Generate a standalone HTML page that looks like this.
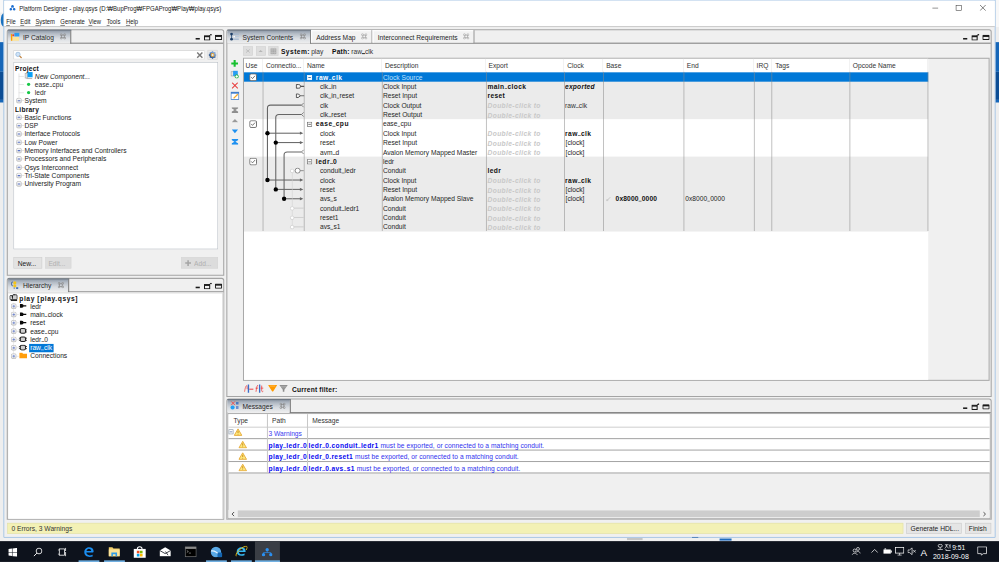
<!DOCTYPE html>
<html><head><meta charset="utf-8">
<style>
html,body{margin:0;padding:0;width:999px;height:562px;overflow:hidden;background:#f0f0f0;}
#root{position:absolute;left:0;top:0;width:1920px;height:1080px;transform:scale(0.520312);transform-origin:0 0;overflow:hidden;background:#f0f0f0;font-family:"Liberation Sans",sans-serif;font-size:12px;color:#000;}
#root div{position:absolute;}
.t{white-space:nowrap;line-height:1;}
.us{display:inline-block;width:0.42em;height:0.09em;background:currentColor;vertical-align:baseline;margin:0 0.02em;}
</style></head><body>
<div id="root">
<div style="left:0.0px;top:0.0px;width:7.0px;height:1040.0px;background:#eeeeee;"></div>
<div style="left:0.0px;top:0.0px;width:7.0px;height:24.0px;background:#f8f8f8;"></div>
<svg style="position:absolute;left:0.0px;top:24.0px;" width="7" height="29" viewBox="0 0 7 29"><ellipse cx="7.5" cy="14.5" rx="6" ry="13" fill="#1a72c0"/></svg>
<div style="left:0.0px;top:81.0px;width:7.0px;height:57.0px;background:#1666b8;"></div>
<div style="left:0.0px;top:138.0px;width:7.0px;height:54.0px;background:#0d4d94;"></div>
<div style="left:0.0px;top:192.0px;width:7.0px;height:5.0px;background:#1666b8;"></div>
<div style="left:1913.0px;top:0.0px;width:7.0px;height:1040.0px;background:#eeeeee;"></div>
<div style="left:1913.0px;top:0.0px;width:7.0px;height:52.0px;background:#f8f8f8;"></div>
<div style="left:1913.0px;top:81.0px;width:7.0px;height:57.0px;background:#1666b8;"></div>
<div style="left:1913.0px;top:138.0px;width:7.0px;height:54.0px;background:#0d4d94;"></div>
<div style="left:1913.0px;top:192.0px;width:7.0px;height:5.0px;background:#1666b8;"></div>
<div style="left:7.0px;top:0.0px;width:1906.0px;height:1033.0px;background:#f0f0f0;border:1px solid #6aa3dc;box-sizing:border-box"></div>
<div style="left:8.0px;top:1.0px;width:1904.0px;height:50.0px;background:#ffffff;"></div>
<div style="left:8.0px;top:50.0px;width:1904.0px;height:1.6px;background:#cdcdcd;"></div>
<svg style="position:absolute;left:18.0px;top:9.0px;" width="12" height="12" viewBox="0 0 12 12"><circle cx="6" cy="3" r="2.4" fill="#1e6fd0"/><circle cx="2.6" cy="9" r="2.4" fill="#1e6fd0"/><circle cx="9.4" cy="9" r="2.4" fill="#1e6fd0"/><path d="M6 3 L2.6 9 M6 3 L9.4 9" stroke="#1e6fd0" stroke-width="1.2"/></svg>
<div class="t" style="left:37.0px;top:10.5px;font-size:12.5px;color:#1a1a1a;font-weight:normal;font-style:normal;transform:scaleX(0.928);transform-origin:0 0">Platform Designer - play.qsys (D:₩BupProg₩FPGAProg₩Play₩play.qsys)</div>
<div style="left:1792.0px;top:15.0px;width:11.0px;height:1.2px;background:#333;"></div>
<div style="left:1837.0px;top:10.0px;width:11.0px;height:11.0px;background:transparent;border:1.2px solid #333;box-sizing:border-box"></div>
<svg style="position:absolute;left:1883.0px;top:9.0px;" width="12" height="12" viewBox="0 0 12 12"><path d="M0.5 0.5 L11.5 11.5 M11.5 0.5 L0.5 11.5" stroke="#333" stroke-width="1.2"/></svg>
<div class="t" style="left:12.3px;top:36.84px;font-size:12.2px;color:#1a1a1a;transform:scaleX(0.925);transform-origin:0 0"><u style="text-decoration:underline;text-underline-offset:1px">F</u>ile</div>
<div class="t" style="left:39.4px;top:36.84px;font-size:12.2px;color:#1a1a1a;transform:scaleX(0.925);transform-origin:0 0"><u style="text-decoration:underline;text-underline-offset:1px">E</u>dit</div>
<div class="t" style="left:68.4px;top:36.84px;font-size:12.2px;color:#1a1a1a;transform:scaleX(0.925);transform-origin:0 0"><u style="text-decoration:underline;text-underline-offset:1px">S</u>ystem</div>
<div class="t" style="left:115.5px;top:36.84px;font-size:12.2px;color:#1a1a1a;transform:scaleX(0.925);transform-origin:0 0"><u style="text-decoration:underline;text-underline-offset:1px">G</u>enerate</div>
<div class="t" style="left:170px;top:36.84px;font-size:12.2px;color:#1a1a1a;transform:scaleX(0.925);transform-origin:0 0"><u style="text-decoration:underline;text-underline-offset:1px">V</u>iew</div>
<div class="t" style="left:204.9px;top:36.84px;font-size:12.2px;color:#1a1a1a;transform:scaleX(0.925);transform-origin:0 0"><u style="text-decoration:underline;text-underline-offset:1px">T</u>ools</div>
<div class="t" style="left:241.8px;top:36.84px;font-size:12.2px;color:#1a1a1a;transform:scaleX(0.925);transform-origin:0 0"><u style="text-decoration:underline;text-underline-offset:1px">H</u>elp</div>
<div style="left:13.0px;top:56.0px;width:418.0px;height:474.0px;background:#f0f0f0;border:2.5px solid #a4a4a4;border-radius:5px 5px 0 0;box-sizing:border-box"></div>
<div style="left:15.0px;top:82.0px;width:414.0px;height:2.0px;background:#7f7f7f;"></div>
<div style="left:15.0px;top:58.0px;width:120.0px;height:26.0px;background:linear-gradient(#8c97a5,#b3bbc5 25%,#d8dce1 60%,#f0f0f0 100%);border-radius:4px 0 0 0"></div>
<div style="left:135.0px;top:58.0px;width:2.0px;height:26.0px;background:#7a7a7a;"></div>
<div style="left:15.0px;top:57.0px;width:122.0px;height:2.0px;background:#69737f;"></div>
<div class="t" style="left:44.0px;top:64.6px;font-size:13.57px;color:#262626;font-weight:normal;font-style:normal;;transform:scaleX(0.9434);transform-origin:0 0">IP Catalog</div>
<svg style="position:absolute;left:115.0px;top:64.0px;" width="12" height="12" viewBox="0 0 12 12"><g fill="none" stroke="#8c8c8c" stroke-width="1.3"><rect x="3.5" y="3.5" width="5" height="5"/><circle cx="2.6" cy="2.6" r="1.9"/><circle cx="9.4" cy="2.6" r="1.9"/><circle cx="2.6" cy="9.4" r="1.9"/><circle cx="9.4" cy="9.4" r="1.9"/></g></svg>
<div style="left:376.0px;top:72.5px;width:8.0px;height:3.0px;background:#1a1a1a;"></div>
<svg style="position:absolute;left:392.0px;top:65.0px;" width="16" height="13" viewBox="0 0 16 13"><rect x="1" y="4" width="10" height="8" fill="none" stroke="#1a1a1a" stroke-width="2"/><rect x="1" y="4" width="10" height="2.5" fill="#1a1a1a"/><path d="M9 5 L13 1.5" stroke="#1a1a1a" stroke-width="1.6" fill="none"/><circle cx="13.5" cy="1.8" r="1.6" fill="#1a1a1a"/></svg>
<svg style="position:absolute;left:413.0px;top:66.5px;" width="14" height="10" viewBox="0 0 14 10"><rect x="1" y="1" width="12" height="8" rx="1" fill="none" stroke="#1a1a1a" stroke-width="2"/><rect x="1" y="1" width="12" height="3" fill="#1a1a1a"/></svg>
<svg style="position:absolute;left:20.0px;top:62.0px;" width="18" height="18" viewBox="0 0 18 18"><rect x="7.7" y="1" width="9.6" height="7" fill="#2a9cf2"/><rect x="3.6" y="9" width="12.9" height="7.4" fill="#fde49a"/><rect x="0.9" y="3.4" width="2.7" height="13" fill="#ffa000"/><circle cx="5.5" cy="5.8" r="1.8" fill="#ef3a2a"/></svg>
<div style="left:26.0px;top:97.0px;width:367.0px;height:17.0px;background:#ffffff;border:1.5px solid #d6d6d6;border-top-color:#c4c4c4;border-left-color:#c8c8c8;box-sizing:border-box"></div>
<svg style="position:absolute;left:29.0px;top:99.0px;" width="14" height="14" viewBox="0 0 14 14"><circle cx="5.5" cy="5.5" r="4.2" fill="#cfe3f7" stroke="#8fb4da" stroke-width="1.4"/><path d="M8.5 8.5 L12.5 12.5" stroke="#c0803a" stroke-width="2.2"/></svg>
<svg style="position:absolute;left:377.0px;top:99.0px;" width="14" height="14" viewBox="0 0 14 14"><path d="M2 2 L12 12 M12 2 L2 12" stroke="#7a7a7a" stroke-width="2.8"/></svg>
<div style="left:399.0px;top:96.0px;width:19.0px;height:19.0px;background:#e9e9e9;border:1px solid #d4d4d4;box-sizing:border-box"></div>
<svg style="position:absolute;left:399.5px;top:96.5px;" width="17" height="17" viewBox="0 0 17 17"><defs><linearGradient id="gg" x1="0" y1="0" x2="0" y2="1"><stop offset="0" stop-color="#8fb0dc"/><stop offset="1" stop-color="#2a5288"/></linearGradient></defs><rect x="3" y="3" width="11" height="11" fill="url(#gg)"/><rect x="3" y="3" width="11" height="11" fill="url(#gg)" transform="rotate(45 8.5 8.5)"/><circle cx="8.5" cy="8.5" r="3.6" fill="#f0a830"/><circle cx="8.5" cy="8.5" r="1.9" fill="#dcecff"/></svg>
<div style="left:26.0px;top:120.0px;width:393.0px;height:359.0px;background:#ffffff;border:1.5px solid #b4bac2;box-sizing:border-box"></div>
<div class="t" style="left:28.8px;top:125.6px;font-size:13.57px;color:#111;font-weight:bold;font-style:normal;;letter-spacing:0.4px;transform:scaleX(0.9434);transform-origin:0 0">Project</div>
<div style="left:35.5px;top:141.0px;width:1.2px;height:56.0px;background:#d0d0d0;"></div>
<div style="left:36.0px;top:145.5px;width:10.0px;height:1.2px;background:#d0d0d0;"></div>
<div style="left:36.0px;top:161.5px;width:10.0px;height:1.2px;background:#d0d0d0;"></div>
<div style="left:36.0px;top:177.5px;width:10.0px;height:1.2px;background:#d0d0d0;"></div>
<svg style="position:absolute;left:47.0px;top:137.0px;" width="16" height="16" viewBox="0 0 16 16"><rect x="1" y="4" width="5" height="9" fill="#ddd" stroke="#9a9a9a" stroke-width="1"/><rect x="6" y="1.5" width="10" height="10" fill="#0aa0f5"/><rect x="4" y="13.5" width="11" height="1.5" fill="#9a9a9a"/></svg>
<div class="t" style="left:66.9px;top:140.1px;font-size:13.57px;color:#222;font-weight:normal;font-style:italic;;transform:scaleX(0.9434);transform-origin:0 0">New Component...</div>
<svg style="position:absolute;left:51.0px;top:158.0px;" width="8" height="8" viewBox="0 0 8 8"><circle cx="4" cy="4" r="3.2" fill="#18c848"/></svg>
<div class="t" style="left:66.9px;top:156.1px;font-size:13.57px;color:#2a2a2a;font-weight:normal;font-style:normal;;transform:scaleX(0.9434);transform-origin:0 0">ease<span class="us"></span>cpu</div>
<svg style="position:absolute;left:51.0px;top:174.0px;" width="8" height="8" viewBox="0 0 8 8"><circle cx="4" cy="4" r="3.2" fill="#18c848"/></svg>
<div class="t" style="left:66.9px;top:172.1px;font-size:13.57px;color:#2a2a2a;font-weight:normal;font-style:normal;;transform:scaleX(0.9434);transform-origin:0 0">ledr</div>
<svg style="position:absolute;left:31.0px;top:188.0px;" width="11" height="11" viewBox="0 0 11 11"><defs><linearGradient id="pg" x1="0" y1="0" x2="0" y2="1"><stop offset="0" stop-color="#ffffff"/><stop offset="1" stop-color="#dcdcdc"/></linearGradient></defs><rect x="0.75" y="0.75" width="9.5" height="9.5" rx="3" fill="url(#pg)" stroke="#b9b9b9" stroke-width="1.5"/><path d="M3 5.5 L8 5.5" stroke="#5a74c8" stroke-width="2"/></svg>
<div style="left:42.0px;top:193.0px;width:5.0px;height:1.2px;background:#cfcfcf;"></div>
<div class="t" style="left:47.0px;top:187.1px;font-size:13.57px;color:#222;font-weight:normal;font-style:normal;;transform:scaleX(0.9434);transform-origin:0 0">System</div>
<div class="t" style="left:28.8px;top:205.1px;font-size:13.57px;color:#111;font-weight:bold;font-style:normal;;letter-spacing:0.4px;transform:scaleX(0.9434);transform-origin:0 0">Library</div>
<svg style="position:absolute;left:31.0px;top:220.0px;" width="11" height="11" viewBox="0 0 11 11"><defs><linearGradient id="pg" x1="0" y1="0" x2="0" y2="1"><stop offset="0" stop-color="#ffffff"/><stop offset="1" stop-color="#dcdcdc"/></linearGradient></defs><rect x="0.75" y="0.75" width="9.5" height="9.5" rx="3" fill="url(#pg)" stroke="#b9b9b9" stroke-width="1.5"/><path d="M3 5.5 L8 5.5" stroke="#5a74c8" stroke-width="2"/></svg>
<div style="left:42.0px;top:225.0px;width:5.0px;height:1.0px;background:#cfcfcf;"></div>
<div class="t" style="left:47.0px;top:219.1px;font-size:13.57px;color:#222;font-weight:normal;font-style:normal;;transform:scaleX(0.9434);transform-origin:0 0">Basic Functions</div>
<svg style="position:absolute;left:31.0px;top:236.0px;" width="11" height="11" viewBox="0 0 11 11"><defs><linearGradient id="pg" x1="0" y1="0" x2="0" y2="1"><stop offset="0" stop-color="#ffffff"/><stop offset="1" stop-color="#dcdcdc"/></linearGradient></defs><rect x="0.75" y="0.75" width="9.5" height="9.5" rx="3" fill="url(#pg)" stroke="#b9b9b9" stroke-width="1.5"/><path d="M3 5.5 L8 5.5" stroke="#5a74c8" stroke-width="2"/></svg>
<div style="left:42.0px;top:241.0px;width:5.0px;height:1.0px;background:#cfcfcf;"></div>
<div class="t" style="left:47.0px;top:235.1px;font-size:13.57px;color:#222;font-weight:normal;font-style:normal;;transform:scaleX(0.9434);transform-origin:0 0">DSP</div>
<svg style="position:absolute;left:31.0px;top:252.0px;" width="11" height="11" viewBox="0 0 11 11"><defs><linearGradient id="pg" x1="0" y1="0" x2="0" y2="1"><stop offset="0" stop-color="#ffffff"/><stop offset="1" stop-color="#dcdcdc"/></linearGradient></defs><rect x="0.75" y="0.75" width="9.5" height="9.5" rx="3" fill="url(#pg)" stroke="#b9b9b9" stroke-width="1.5"/><path d="M3 5.5 L8 5.5" stroke="#5a74c8" stroke-width="2"/></svg>
<div style="left:42.0px;top:257.0px;width:5.0px;height:1.0px;background:#cfcfcf;"></div>
<div class="t" style="left:47.0px;top:251.1px;font-size:13.57px;color:#222;font-weight:normal;font-style:normal;;transform:scaleX(0.9434);transform-origin:0 0">Interface Protocols</div>
<svg style="position:absolute;left:31.0px;top:268.0px;" width="11" height="11" viewBox="0 0 11 11"><defs><linearGradient id="pg" x1="0" y1="0" x2="0" y2="1"><stop offset="0" stop-color="#ffffff"/><stop offset="1" stop-color="#dcdcdc"/></linearGradient></defs><rect x="0.75" y="0.75" width="9.5" height="9.5" rx="3" fill="url(#pg)" stroke="#b9b9b9" stroke-width="1.5"/><path d="M3 5.5 L8 5.5" stroke="#5a74c8" stroke-width="2"/></svg>
<div style="left:42.0px;top:273.0px;width:5.0px;height:1.0px;background:#cfcfcf;"></div>
<div class="t" style="left:47.0px;top:267.1px;font-size:13.57px;color:#222;font-weight:normal;font-style:normal;;transform:scaleX(0.9434);transform-origin:0 0">Low Power</div>
<svg style="position:absolute;left:31.0px;top:284.0px;" width="11" height="11" viewBox="0 0 11 11"><defs><linearGradient id="pg" x1="0" y1="0" x2="0" y2="1"><stop offset="0" stop-color="#ffffff"/><stop offset="1" stop-color="#dcdcdc"/></linearGradient></defs><rect x="0.75" y="0.75" width="9.5" height="9.5" rx="3" fill="url(#pg)" stroke="#b9b9b9" stroke-width="1.5"/><path d="M3 5.5 L8 5.5" stroke="#5a74c8" stroke-width="2"/></svg>
<div style="left:42.0px;top:289.0px;width:5.0px;height:1.0px;background:#cfcfcf;"></div>
<div class="t" style="left:47.0px;top:283.1px;font-size:13.57px;color:#222;font-weight:normal;font-style:normal;;transform:scaleX(0.9434);transform-origin:0 0">Memory Interfaces and Controllers</div>
<svg style="position:absolute;left:31.0px;top:300.0px;" width="11" height="11" viewBox="0 0 11 11"><defs><linearGradient id="pg" x1="0" y1="0" x2="0" y2="1"><stop offset="0" stop-color="#ffffff"/><stop offset="1" stop-color="#dcdcdc"/></linearGradient></defs><rect x="0.75" y="0.75" width="9.5" height="9.5" rx="3" fill="url(#pg)" stroke="#b9b9b9" stroke-width="1.5"/><path d="M3 5.5 L8 5.5" stroke="#5a74c8" stroke-width="2"/></svg>
<div style="left:42.0px;top:305.0px;width:5.0px;height:1.0px;background:#cfcfcf;"></div>
<div class="t" style="left:47.0px;top:299.1px;font-size:13.57px;color:#222;font-weight:normal;font-style:normal;;transform:scaleX(0.9434);transform-origin:0 0">Processors and Peripherals</div>
<svg style="position:absolute;left:31.0px;top:316.0px;" width="11" height="11" viewBox="0 0 11 11"><defs><linearGradient id="pg" x1="0" y1="0" x2="0" y2="1"><stop offset="0" stop-color="#ffffff"/><stop offset="1" stop-color="#dcdcdc"/></linearGradient></defs><rect x="0.75" y="0.75" width="9.5" height="9.5" rx="3" fill="url(#pg)" stroke="#b9b9b9" stroke-width="1.5"/><path d="M3 5.5 L8 5.5" stroke="#5a74c8" stroke-width="2"/></svg>
<div style="left:42.0px;top:321.0px;width:5.0px;height:1.0px;background:#cfcfcf;"></div>
<div class="t" style="left:47.0px;top:315.1px;font-size:13.57px;color:#222;font-weight:normal;font-style:normal;;transform:scaleX(0.9434);transform-origin:0 0">Qsys Interconnect</div>
<svg style="position:absolute;left:31.0px;top:332.0px;" width="11" height="11" viewBox="0 0 11 11"><defs><linearGradient id="pg" x1="0" y1="0" x2="0" y2="1"><stop offset="0" stop-color="#ffffff"/><stop offset="1" stop-color="#dcdcdc"/></linearGradient></defs><rect x="0.75" y="0.75" width="9.5" height="9.5" rx="3" fill="url(#pg)" stroke="#b9b9b9" stroke-width="1.5"/><path d="M3 5.5 L8 5.5" stroke="#5a74c8" stroke-width="2"/></svg>
<div style="left:42.0px;top:337.0px;width:5.0px;height:1.0px;background:#cfcfcf;"></div>
<div class="t" style="left:47.0px;top:331.1px;font-size:13.57px;color:#222;font-weight:normal;font-style:normal;;transform:scaleX(0.9434);transform-origin:0 0">Tri-State Components</div>
<svg style="position:absolute;left:31.0px;top:348.0px;" width="11" height="11" viewBox="0 0 11 11"><defs><linearGradient id="pg" x1="0" y1="0" x2="0" y2="1"><stop offset="0" stop-color="#ffffff"/><stop offset="1" stop-color="#dcdcdc"/></linearGradient></defs><rect x="0.75" y="0.75" width="9.5" height="9.5" rx="3" fill="url(#pg)" stroke="#b9b9b9" stroke-width="1.5"/><path d="M3 5.5 L8 5.5" stroke="#5a74c8" stroke-width="2"/></svg>
<div style="left:42.0px;top:353.0px;width:5.0px;height:1.0px;background:#cfcfcf;"></div>
<div class="t" style="left:47.0px;top:347.1px;font-size:13.57px;color:#222;font-weight:normal;font-style:normal;;transform:scaleX(0.9434);transform-origin:0 0">University Program</div>
<div style="left:26.0px;top:494.0px;width:55.0px;height:22.0px;background:#e3e3e3;border:1px solid #cdcdcd;box-sizing:border-box"></div>
<div class="t" style="left:34.0px;top:500.1px;font-size:13.57px;color:#1a1a1a;font-weight:normal;font-style:normal;;transform:scaleX(0.9434);transform-origin:0 0">New...</div>
<div style="left:86.5px;top:494.0px;width:50.0px;height:22.0px;background:#dddddd;border:1px solid #d6d6d6;box-sizing:border-box"></div>
<div class="t" style="left:93.0px;top:500.1px;font-size:13.57px;color:#b0b0b0;font-weight:normal;font-style:normal;;transform:scaleX(0.9434);transform-origin:0 0">Edit...</div>
<div style="left:347.5px;top:494.0px;width:71.0px;height:22.0px;background:#dcdcdc;border:1px solid #d6d6d6;box-sizing:border-box"></div>
<svg style="position:absolute;left:355.0px;top:499.0px;" width="13" height="13" viewBox="0 0 13 13"><path d="M6.5 1 L6.5 12 M1 6.5 L12 6.5" stroke="#a5a5a5" stroke-width="3"/></svg>
<div class="t" style="left:373.0px;top:500.1px;font-size:13.57px;color:#b0b0b0;font-weight:normal;font-style:normal;;transform:scaleX(0.9434);transform-origin:0 0">Add...</div>
<div style="left:13.0px;top:534.0px;width:418.0px;height:465.0px;background:#f0f0f0;border:2.5px solid #a4a4a4;border-radius:5px 5px 0 0;box-sizing:border-box"></div>
<div style="left:15.0px;top:560.0px;width:414.0px;height:2.0px;background:#7f7f7f;"></div>
<div style="left:15.0px;top:536.0px;width:116.0px;height:26.0px;background:linear-gradient(#8c97a5,#b3bbc5 25%,#d8dce1 60%,#f0f0f0 100%);border-radius:4px 0 0 0"></div>
<div style="left:131.0px;top:536.0px;width:2.0px;height:26.0px;background:#7a7a7a;"></div>
<div style="left:15.0px;top:535.0px;width:118.0px;height:2.0px;background:#69737f;"></div>
<div class="t" style="left:44.0px;top:542.6px;font-size:13.57px;color:#262626;font-weight:normal;font-style:normal;;transform:scaleX(0.9434);transform-origin:0 0">Hierarchy</div>
<svg style="position:absolute;left:111.0px;top:542.0px;" width="12" height="12" viewBox="0 0 12 12"><g fill="none" stroke="#8c8c8c" stroke-width="1.3"><rect x="3.5" y="3.5" width="5" height="5"/><circle cx="2.6" cy="2.6" r="1.9"/><circle cx="9.4" cy="2.6" r="1.9"/><circle cx="2.6" cy="9.4" r="1.9"/><circle cx="9.4" cy="9.4" r="1.9"/></g></svg>
<div style="left:376.0px;top:550.5px;width:8.0px;height:3.0px;background:#1a1a1a;"></div>
<svg style="position:absolute;left:392.0px;top:543.0px;" width="16" height="13" viewBox="0 0 16 13"><rect x="1" y="4" width="10" height="8" fill="none" stroke="#1a1a1a" stroke-width="2"/><rect x="1" y="4" width="10" height="2.5" fill="#1a1a1a"/><path d="M9 5 L13 1.5" stroke="#1a1a1a" stroke-width="1.6" fill="none"/><circle cx="13.5" cy="1.8" r="1.6" fill="#1a1a1a"/></svg>
<svg style="position:absolute;left:413.0px;top:544.5px;" width="14" height="10" viewBox="0 0 14 10"><rect x="1" y="1" width="12" height="8" rx="1" fill="none" stroke="#1a1a1a" stroke-width="2"/><rect x="1" y="1" width="12" height="3" fill="#1a1a1a"/></svg>
<svg style="position:absolute;left:20.0px;top:540.0px;" width="18" height="17" viewBox="0 0 18 17"><path d="M4.5 1.5 C1 3 1 8 4.5 10" stroke="#4f72a8" stroke-width="2" fill="none"/><circle cx="8.5" cy="3.5" r="3" fill="#f5c518"/><circle cx="8.5" cy="9.5" r="3" fill="#f5c518"/><rect x="6" y="12" width="3" height="3.5" fill="#8fa3bf"/><rect x="11" y="12" width="4" height="3.5" fill="#3f6fb0"/></svg>
<div style="left:15.5px;top:562.0px;width:413.0px;height:435.0px;background:#ffffff;border-top:2px solid #dcdcdc;border-right:2px solid #dcdcdc;box-sizing:border-box"></div>
<svg style="position:absolute;left:17.5px;top:565.0px;" width="16" height="14" viewBox="0 0 16 14"><rect x="1" y="3" width="6" height="8" rx="1" fill="#ddd" stroke="#222" stroke-width="1.6"/><rect x="6" y="1.5" width="9" height="9.5" rx="2" fill="#cfcfcf" stroke="#222" stroke-width="1.6"/><rect x="3" y="11" width="12" height="2.6" fill="#222"/><circle cx="5.5" cy="5.5" r="1.3" fill="#000"/><circle cx="9" cy="1.3" r="1.2" fill="#222"/></svg>
<div class="t" style="left:36.9px;top:566.6px;font-size:13.57px;color:#111;font-weight:bold;font-style:normal;letter-spacing:1.2px;transform:scaleX(0.9434);transform-origin:0 0">play [play.qsys]</div>
<div style="left:25.5px;top:582.0px;width:1.0px;height:107.0px;background:#dadada;"></div>
<svg style="position:absolute;left:21.0px;top:583.0px;" width="11" height="11" viewBox="0 0 11 11"><defs><linearGradient id="pg" x1="0" y1="0" x2="0" y2="1"><stop offset="0" stop-color="#ffffff"/><stop offset="1" stop-color="#dcdcdc"/></linearGradient></defs><rect x="0.75" y="0.75" width="9.5" height="9.5" rx="3" fill="url(#pg)" stroke="#b9b9b9" stroke-width="1.5"/><path d="M3 5.5 L8 5.5" stroke="#5a74c8" stroke-width="1.3"/><path d="M5.5 3 L5.5 8" stroke="#5a74c8" stroke-width="1.3"/></svg>
<div style="left:32.0px;top:588.0px;width:4.0px;height:1.2px;background:#d0d0d0;"></div>
<svg style="position:absolute;left:38.0px;top:583.0px;" width="13" height="10" viewBox="0 0 13 10"><path d="M0 1.5 H4 C6.5 1.5 7 3 7 3.8 H13 V6.2 H7 C7 7 6.5 8.5 4 8.5 H0 Z" fill="#0a0a0a"/></svg>
<div class="t" style="left:57.5px;top:582.1px;font-size:13.57px;color:#222;font-weight:normal;font-style:normal;;transform:scaleX(0.9434);transform-origin:0 0">ledr</div>
<svg style="position:absolute;left:21.0px;top:599.0px;" width="11" height="11" viewBox="0 0 11 11"><defs><linearGradient id="pg" x1="0" y1="0" x2="0" y2="1"><stop offset="0" stop-color="#ffffff"/><stop offset="1" stop-color="#dcdcdc"/></linearGradient></defs><rect x="0.75" y="0.75" width="9.5" height="9.5" rx="3" fill="url(#pg)" stroke="#b9b9b9" stroke-width="1.5"/><path d="M3 5.5 L8 5.5" stroke="#5a74c8" stroke-width="1.3"/><path d="M5.5 3 L5.5 8" stroke="#5a74c8" stroke-width="1.3"/></svg>
<div style="left:32.0px;top:604.0px;width:4.0px;height:1.2px;background:#d0d0d0;"></div>
<svg style="position:absolute;left:38.0px;top:599.0px;" width="13" height="10" viewBox="0 0 13 10"><path d="M0 1.5 H4 C6.5 1.5 7 3 7 3.8 H13 V6.2 H7 C7 7 6.5 8.5 4 8.5 H0 Z" fill="#0a0a0a"/></svg>
<div class="t" style="left:57.5px;top:598.1px;font-size:13.57px;color:#222;font-weight:normal;font-style:normal;;transform:scaleX(0.9434);transform-origin:0 0">main<span class="us"></span>clock</div>
<svg style="position:absolute;left:21.0px;top:615.0px;" width="11" height="11" viewBox="0 0 11 11"><defs><linearGradient id="pg" x1="0" y1="0" x2="0" y2="1"><stop offset="0" stop-color="#ffffff"/><stop offset="1" stop-color="#dcdcdc"/></linearGradient></defs><rect x="0.75" y="0.75" width="9.5" height="9.5" rx="3" fill="url(#pg)" stroke="#b9b9b9" stroke-width="1.5"/><path d="M3 5.5 L8 5.5" stroke="#5a74c8" stroke-width="1.3"/><path d="M5.5 3 L5.5 8" stroke="#5a74c8" stroke-width="1.3"/></svg>
<div style="left:32.0px;top:620.0px;width:4.0px;height:1.2px;background:#d0d0d0;"></div>
<svg style="position:absolute;left:38.0px;top:615.0px;" width="13" height="10" viewBox="0 0 13 10"><path d="M0 1.5 H4 C6.5 1.5 7 3 7 3.8 H13 V6.2 H7 C7 7 6.5 8.5 4 8.5 H0 Z" fill="#0a0a0a"/></svg>
<div class="t" style="left:57.5px;top:614.1px;font-size:13.57px;color:#222;font-weight:normal;font-style:normal;;transform:scaleX(0.9434);transform-origin:0 0">reset</div>
<svg style="position:absolute;left:21.0px;top:631.0px;" width="11" height="11" viewBox="0 0 11 11"><defs><linearGradient id="pg" x1="0" y1="0" x2="0" y2="1"><stop offset="0" stop-color="#ffffff"/><stop offset="1" stop-color="#dcdcdc"/></linearGradient></defs><rect x="0.75" y="0.75" width="9.5" height="9.5" rx="3" fill="url(#pg)" stroke="#b9b9b9" stroke-width="1.5"/><path d="M3 5.5 L8 5.5" stroke="#5a74c8" stroke-width="1.3"/><path d="M5.5 3 L5.5 8" stroke="#5a74c8" stroke-width="1.3"/></svg>
<div style="left:32.0px;top:636.0px;width:4.0px;height:1.2px;background:#d0d0d0;"></div>
<svg style="position:absolute;left:36.0px;top:630.0px;" width="16" height="12" viewBox="0 0 16 12"><rect x="3" y="1.5" width="10" height="9" rx="2.5" fill="#cfcfcf" stroke="#222" stroke-width="2"/><path d="M0 4 L3 4 M0 8 L3 8 M13 4 L16 4 M13 8 L16 8" stroke="#222" stroke-width="1.6"/></svg>
<div class="t" style="left:57.5px;top:630.1px;font-size:13.57px;color:#222;font-weight:normal;font-style:normal;;transform:scaleX(0.9434);transform-origin:0 0">ease<span class="us"></span>cpu</div>
<svg style="position:absolute;left:21.0px;top:647.0px;" width="11" height="11" viewBox="0 0 11 11"><defs><linearGradient id="pg" x1="0" y1="0" x2="0" y2="1"><stop offset="0" stop-color="#ffffff"/><stop offset="1" stop-color="#dcdcdc"/></linearGradient></defs><rect x="0.75" y="0.75" width="9.5" height="9.5" rx="3" fill="url(#pg)" stroke="#b9b9b9" stroke-width="1.5"/><path d="M3 5.5 L8 5.5" stroke="#5a74c8" stroke-width="1.3"/><path d="M5.5 3 L5.5 8" stroke="#5a74c8" stroke-width="1.3"/></svg>
<div style="left:32.0px;top:652.0px;width:4.0px;height:1.2px;background:#d0d0d0;"></div>
<svg style="position:absolute;left:36.0px;top:646.0px;" width="16" height="12" viewBox="0 0 16 12"><rect x="3" y="1.5" width="10" height="9" rx="2.5" fill="#cfcfcf" stroke="#222" stroke-width="2"/><path d="M0 4 L3 4 M0 8 L3 8 M13 4 L16 4 M13 8 L16 8" stroke="#222" stroke-width="1.6"/></svg>
<div class="t" style="left:57.5px;top:646.1px;font-size:13.57px;color:#222;font-weight:normal;font-style:normal;;transform:scaleX(0.9434);transform-origin:0 0">ledr<span class="us"></span>0</div>
<svg style="position:absolute;left:21.0px;top:663.0px;" width="11" height="11" viewBox="0 0 11 11"><defs><linearGradient id="pg" x1="0" y1="0" x2="0" y2="1"><stop offset="0" stop-color="#ffffff"/><stop offset="1" stop-color="#dcdcdc"/></linearGradient></defs><rect x="0.75" y="0.75" width="9.5" height="9.5" rx="3" fill="url(#pg)" stroke="#b9b9b9" stroke-width="1.5"/><path d="M3 5.5 L8 5.5" stroke="#5a74c8" stroke-width="1.3"/><path d="M5.5 3 L5.5 8" stroke="#5a74c8" stroke-width="1.3"/></svg>
<div style="left:32.0px;top:668.0px;width:4.0px;height:1.2px;background:#d0d0d0;"></div>
<svg style="position:absolute;left:36.0px;top:662.0px;" width="16" height="12" viewBox="0 0 16 12"><rect x="3" y="1.5" width="10" height="9" rx="2.5" fill="#cfcfcf" stroke="#222" stroke-width="2"/><path d="M0 4 L3 4 M0 8 L3 8 M13 4 L16 4 M13 8 L16 8" stroke="#222" stroke-width="1.6"/></svg>
<div style="left:55.7px;top:660.5px;width:47.0px;height:16.0px;background:#0078d7;"></div>
<div class="t" style="left:57.5px;top:662.1px;font-size:13.57px;color:#ffffff;font-weight:normal;font-style:normal;;transform:scaleX(0.9434);transform-origin:0 0">raw<span class="us"></span>clk</div>
<svg style="position:absolute;left:21.0px;top:679.0px;" width="11" height="11" viewBox="0 0 11 11"><defs><linearGradient id="pg" x1="0" y1="0" x2="0" y2="1"><stop offset="0" stop-color="#ffffff"/><stop offset="1" stop-color="#dcdcdc"/></linearGradient></defs><rect x="0.75" y="0.75" width="9.5" height="9.5" rx="3" fill="url(#pg)" stroke="#b9b9b9" stroke-width="1.5"/><path d="M3 5.5 L8 5.5" stroke="#5a74c8" stroke-width="1.3"/><path d="M5.5 3 L5.5 8" stroke="#5a74c8" stroke-width="1.3"/></svg>
<div style="left:32.0px;top:684.0px;width:4.0px;height:1.2px;background:#d0d0d0;"></div>
<svg style="position:absolute;left:37.0px;top:677.0px;" width="15" height="12" viewBox="0 0 15 12"><path d="M0 1 L6 1 L7 3 L15 3 L15 12 L0 12 Z" fill="#ff9e0d"/></svg>
<div class="t" style="left:57.5px;top:678.1px;font-size:13.57px;color:#222;font-weight:normal;font-style:normal;;transform:scaleX(0.9434);transform-origin:0 0">Connections</div>
<div style="left:435.0px;top:56.0px;width:1471.0px;height:707.0px;background:#f0f0f0;border:2.5px solid #a4a4a4;border-radius:5px 5px 0 0;box-sizing:border-box"></div>
<div style="left:437.0px;top:82.0px;width:1467.0px;height:2.0px;background:#7f7f7f;"></div>
<div style="left:437.0px;top:58.0px;width:159.0px;height:26.0px;background:linear-gradient(#8c97a5,#b3bbc5 25%,#d8dce1 60%,#f0f0f0 100%);border-radius:4px 0 0 0"></div>
<div style="left:596.0px;top:58.0px;width:2.0px;height:26.0px;background:#7a7a7a;"></div>
<div style="left:437.0px;top:57.0px;width:161.0px;height:2.0px;background:#69737f;"></div>
<div class="t" style="left:466.0px;top:64.6px;font-size:13.57px;color:#262626;font-weight:normal;font-style:normal;;transform:scaleX(0.9434);transform-origin:0 0">System Contents</div>
<svg style="position:absolute;left:576.0px;top:64.0px;" width="12" height="12" viewBox="0 0 12 12"><g fill="none" stroke="#8c8c8c" stroke-width="1.3"><rect x="3.5" y="3.5" width="5" height="5"/><circle cx="2.6" cy="2.6" r="1.9"/><circle cx="9.4" cy="2.6" r="1.9"/><circle cx="2.6" cy="9.4" r="1.9"/><circle cx="9.4" cy="9.4" r="1.9"/></g></svg>
<div style="left:598.0px;top:58.0px;width:116.0px;height:24.0px;background:#f2f2f2;border-left:2px solid #fff;border-top:2px solid #fff;box-sizing:border-box"></div>
<div style="left:714.0px;top:58.0px;width:2.0px;height:26.0px;background:#9a9a9a;"></div>
<div class="t" style="left:608.0px;top:64.6px;font-size:13.57px;color:#262626;font-weight:normal;font-style:normal;;transform:scaleX(0.9434);transform-origin:0 0">Address Map</div>
<svg style="position:absolute;left:694.0px;top:64.0px;" width="12" height="12" viewBox="0 0 12 12"><g fill="none" stroke="#a8a8a8" stroke-width="1.3"><rect x="3.5" y="3.5" width="5" height="5"/><circle cx="2.6" cy="2.6" r="1.9"/><circle cx="9.4" cy="2.6" r="1.9"/><circle cx="2.6" cy="9.4" r="1.9"/><circle cx="9.4" cy="9.4" r="1.9"/></g></svg>
<div style="left:716.0px;top:58.0px;width:194.0px;height:24.0px;background:#f2f2f2;border-left:2px solid #fff;border-top:2px solid #fff;box-sizing:border-box"></div>
<div style="left:910.0px;top:58.0px;width:2.0px;height:26.0px;background:#9a9a9a;"></div>
<div class="t" style="left:726.0px;top:64.6px;font-size:13.57px;color:#262626;font-weight:normal;font-style:normal;;transform:scaleX(0.9434);transform-origin:0 0">Interconnect Requirements</div>
<svg style="position:absolute;left:890.0px;top:64.0px;" width="12" height="12" viewBox="0 0 12 12"><g fill="none" stroke="#a8a8a8" stroke-width="1.3"><rect x="3.5" y="3.5" width="5" height="5"/><circle cx="2.6" cy="2.6" r="1.9"/><circle cx="9.4" cy="2.6" r="1.9"/><circle cx="2.6" cy="9.4" r="1.9"/><circle cx="9.4" cy="9.4" r="1.9"/></g></svg>
<div style="left:1851.0px;top:72.5px;width:8.0px;height:3.0px;background:#1a1a1a;"></div>
<svg style="position:absolute;left:1867.0px;top:65.0px;" width="16" height="13" viewBox="0 0 16 13"><rect x="1" y="4" width="10" height="8" fill="none" stroke="#1a1a1a" stroke-width="2"/><rect x="1" y="4" width="10" height="2.5" fill="#1a1a1a"/><path d="M9 5 L13 1.5" stroke="#1a1a1a" stroke-width="1.6" fill="none"/><circle cx="13.5" cy="1.8" r="1.6" fill="#1a1a1a"/></svg>
<svg style="position:absolute;left:1888.0px;top:66.5px;" width="14" height="10" viewBox="0 0 14 10"><rect x="1" y="1" width="12" height="8" rx="1" fill="none" stroke="#1a1a1a" stroke-width="2"/><rect x="1" y="1" width="12" height="3" fill="#1a1a1a"/></svg>
<svg style="position:absolute;left:441.0px;top:62.0px;" width="20" height="17" viewBox="0 0 20 17"><path d="M4 3.4 V13.3" stroke="#2a4f7c" stroke-width="1.5"/><circle cx="4" cy="3.4" r="2.6" fill="#1c3d66"/><circle cx="4" cy="13.3" r="2.6" fill="#1c3d66"/><rect x="7" y="2.4" width="11" height="2.2" fill="#9fb3cc"/><rect x="7" y="7.3" width="11" height="2.2" fill="#b7c7da"/><rect x="7" y="12.2" width="11" height="2.2" fill="#9fb3cc"/><circle cx="9" cy="8.4" r="1.6" fill="#fff"/></svg>
<div style="left:467.4px;top:89.0px;width:18.5px;height:18.0px;background:#dedede;border:1px solid #d2d2d2;box-sizing:border-box"></div>
<div style="left:492.0px;top:89.0px;width:18.5px;height:18.0px;background:#dedede;border:1px solid #d2d2d2;box-sizing:border-box"></div>
<div style="left:516.0px;top:89.0px;width:18.5px;height:18.0px;background:#dedede;border:1px solid #d2d2d2;box-sizing:border-box"></div>
<svg style="position:absolute;left:472.0px;top:94.0px;" width="9" height="8" viewBox="0 0 9 8"><path d="M1 1 L8 7 M8 1 L1 7" stroke="#b5b5b5" stroke-width="1.4"/></svg>
<svg style="position:absolute;left:496.0px;top:94.0px;" width="10" height="8" viewBox="0 0 10 8"><path d="M1 6 L5 2 L9 6 Z" fill="#b5b5b5"/></svg>
<svg style="position:absolute;left:518.0px;top:91.0px;" width="15" height="15" viewBox="0 0 15 15"><rect x="2" y="2" width="11" height="11" fill="#a9a9a9"/><path d="M0 5 H15 M0 10 H15 M5 0 V15 M10 0 V15" stroke="#c8c8c8" stroke-width="1"/></svg>
<div class="t" style="left:539.9px;top:92.6px;font-size:13.57px;color:#111;font-weight:bold;font-style:normal;letter-spacing:0.9px;transform:scaleX(0.9434);transform-origin:0 0">System:</div>
<div class="t" style="left:597.7px;top:92.6px;font-size:13.57px;color:#333;font-weight:normal;font-style:normal;;transform:scaleX(0.9434);transform-origin:0 0">play</div>
<div class="t" style="left:637.5px;top:92.6px;font-size:13.57px;color:#111;font-weight:bold;font-style:normal;letter-spacing:0.5px;transform:scaleX(0.9434);transform-origin:0 0">Path:</div>
<div class="t" style="left:674.6px;top:92.6px;font-size:13.57px;color:#333;font-weight:normal;font-style:normal;;transform:scaleX(0.9434);transform-origin:0 0">raw<span class="us"></span>clk</div>
<svg style="position:absolute;left:444.0px;top:115.0px;" width="14" height="14" viewBox="0 0 14 14"><path d="M7 0.5 V13.5 M0.5 7 H13.5" stroke="#18c030" stroke-width="4"/></svg>
<svg style="position:absolute;left:443.0px;top:135.0px;" width="17" height="16" viewBox="0 0 17 16"><rect x="1" y="3" width="8" height="8" fill="#e6e6e6" stroke="#888" stroke-width="1"/><rect x="5" y="1" width="9" height="10" fill="#2a9df4"/><circle cx="12" cy="12" r="3.2" fill="#fff" stroke="#1bb03c" stroke-width="1.8"/></svg>
<svg style="position:absolute;left:445.0px;top:158.0px;" width="13" height="13" viewBox="0 0 13 13"><path d="M1 1 L12 12 M12 1 L1 12" stroke="#e84040" stroke-width="2"/></svg>
<svg style="position:absolute;left:443.0px;top:176.0px;" width="17" height="16" viewBox="0 0 17 16"><rect x="1" y="1" width="15" height="14" fill="#fff" stroke="#3a78c8" stroke-width="1.5"/><rect x="1" y="1" width="15" height="3" fill="#3a78c8"/><path d="M6 13 L14 5" stroke="#f5a623" stroke-width="2.5"/></svg>
<svg style="position:absolute;left:445.0px;top:206.0px;" width="13" height="11" viewBox="0 0 13 11"><path d="M0 0 H13 V2.2 L7.5 5.5 L13 8.8 V11 H0 V8.8 L5.5 5.5 L0 2.2 Z" fill="#8e8e8e"/></svg>
<svg style="position:absolute;left:445.0px;top:228.0px;" width="13" height="8" viewBox="0 0 13 8"><path d="M6.5 0.5 L12.5 7 H0.5 Z" fill="#9a9a9a"/></svg>
<svg style="position:absolute;left:445.0px;top:248.0px;" width="13" height="9" viewBox="0 0 13 9"><path d="M6.5 8 L12.5 1 H0.5 Z" fill="#1e90f0"/></svg>
<svg style="position:absolute;left:445.0px;top:267.0px;" width="13" height="11" viewBox="0 0 13 11"><path d="M0 0 H13 V2.2 L7.5 5.5 L13 8.8 V11 H0 V8.8 L5.5 5.5 L0 2.2 Z" fill="#1e90f0"/></svg>
<div style="left:467.0px;top:111.0px;width:1435.0px;height:621.0px;background:#f0f0f0;border:2px solid #a9a9a9;box-sizing:border-box"></div>
<div style="left:469.0px;top:113.0px;width:1315.0px;height:617.0px;background:#ffffff;"></div>
<div style="left:504.0px;top:113.0px;width:1.0px;height:25.0px;background:#e6e6e6;"></div>
<div style="left:583.0px;top:113.0px;width:1.0px;height:25.0px;background:#e6e6e6;"></div>
<div style="left:733.0px;top:113.0px;width:1.0px;height:25.0px;background:#e6e6e6;"></div>
<div style="left:933.0px;top:113.0px;width:1.0px;height:25.0px;background:#e6e6e6;"></div>
<div style="left:1083.0px;top:113.0px;width:1.0px;height:25.0px;background:#e6e6e6;"></div>
<div style="left:1158.0px;top:113.0px;width:1.0px;height:25.0px;background:#e6e6e6;"></div>
<div style="left:1313.0px;top:113.0px;width:1.0px;height:25.0px;background:#e6e6e6;"></div>
<div style="left:1448.0px;top:113.0px;width:1.0px;height:25.0px;background:#e6e6e6;"></div>
<div style="left:1482.0px;top:113.0px;width:1.0px;height:25.0px;background:#e6e6e6;"></div>
<div style="left:1632.0px;top:113.0px;width:1.0px;height:25.0px;background:#e6e6e6;"></div>
<div style="left:1782.0px;top:113.0px;width:1.0px;height:25.0px;background:#e6e6e6;"></div>
<div class="t" style="left:472.0px;top:120.1px;font-size:13.57px;color:#333;font-weight:normal;font-style:normal;;transform:scaleX(0.9434);transform-origin:0 0">Use</div>
<div class="t" style="left:510.5px;top:120.1px;font-size:13.57px;color:#333;font-weight:normal;font-style:normal;;transform:scaleX(0.9434);transform-origin:0 0">Connectio...</div>
<div class="t" style="left:590.0px;top:120.1px;font-size:13.57px;color:#333;font-weight:normal;font-style:normal;;transform:scaleX(0.9434);transform-origin:0 0">Name</div>
<div class="t" style="left:740.0px;top:120.1px;font-size:13.57px;color:#333;font-weight:normal;font-style:normal;;transform:scaleX(0.9434);transform-origin:0 0">Description</div>
<div class="t" style="left:939.0px;top:120.1px;font-size:13.57px;color:#333;font-weight:normal;font-style:normal;;transform:scaleX(0.9434);transform-origin:0 0">Export</div>
<div class="t" style="left:1090.0px;top:120.1px;font-size:13.57px;color:#333;font-weight:normal;font-style:normal;;transform:scaleX(0.9434);transform-origin:0 0">Clock</div>
<div class="t" style="left:1164.7px;top:120.1px;font-size:13.57px;color:#333;font-weight:normal;font-style:normal;;transform:scaleX(0.9434);transform-origin:0 0">Base</div>
<div class="t" style="left:1319.6px;top:120.1px;font-size:13.57px;color:#333;font-weight:normal;font-style:normal;;transform:scaleX(0.9434);transform-origin:0 0">End</div>
<div class="t" style="left:1454.0px;top:120.1px;font-size:13.57px;color:#333;font-weight:normal;font-style:normal;;transform:scaleX(0.9434);transform-origin:0 0">IRQ</div>
<div class="t" style="left:1489.7px;top:120.1px;font-size:13.57px;color:#333;font-weight:normal;font-style:normal;;transform:scaleX(0.9434);transform-origin:0 0">Tags</div>
<div class="t" style="left:1638.8px;top:120.1px;font-size:13.57px;color:#333;font-weight:normal;font-style:normal;;transform:scaleX(0.9434);transform-origin:0 0">Opcode Name</div>
<div style="left:469.0px;top:138.7px;width:1315.0px;height:19.2px;background:#0078d7;"></div>
<div style="left:469.0px;top:157.4px;width:1315.0px;height:71.6px;background:#ebebeb;"></div>
<div style="left:469.0px;top:301.0px;width:1315.0px;height:144.0px;background:#ebebeb;"></div>
<div style="left:505.0px;top:138.4px;width:1.2px;height:306.0px;background:#8a8a8a;"></div>
<div style="left:584.0px;top:138.4px;width:1.2px;height:306.0px;background:#8a8a8a;"></div>
<div style="left:734.0px;top:138.4px;width:1.2px;height:306.0px;background:#8a8a8a;"></div>
<div style="left:934.0px;top:138.4px;width:1.2px;height:306.0px;background:#8a8a8a;"></div>
<div style="left:1084.0px;top:138.4px;width:1.2px;height:306.0px;background:#8a8a8a;"></div>
<div style="left:1159.0px;top:138.4px;width:1.2px;height:306.0px;background:#8a8a8a;"></div>
<div style="left:1314.0px;top:138.4px;width:1.2px;height:306.0px;background:#8a8a8a;"></div>
<div style="left:1449.0px;top:138.4px;width:1.2px;height:306.0px;background:#8a8a8a;"></div>
<div style="left:1483.0px;top:138.4px;width:1.2px;height:306.0px;background:#8a8a8a;"></div>
<div style="left:1633.0px;top:138.4px;width:1.2px;height:306.0px;background:#8a8a8a;"></div>
<div style="left:1783.0px;top:138.4px;width:1.2px;height:306.0px;background:#8a8a8a;"></div>
<svg style="position:absolute;left:478.5px;top:140.8px;" width="15" height="15" viewBox="0 0 15 15"><rect x="1" y="1" width="13" height="13" rx="2.5" fill="#fff" stroke="#6a6a6a" stroke-width="1.8"/><path d="M3.8 7.2 L6.3 10 L11.2 4.6" stroke="#505050" stroke-width="1.5" fill="none"/></svg>
<svg style="position:absolute;left:478.5px;top:230.8px;" width="15" height="15" viewBox="0 0 15 15"><rect x="1" y="1" width="13" height="13" rx="2.5" fill="#fff" stroke="#6a6a6a" stroke-width="1.8"/><path d="M3.8 7.2 L6.3 10 L11.2 4.6" stroke="#505050" stroke-width="1.5" fill="none"/></svg>
<svg style="position:absolute;left:478.5px;top:302.8px;" width="15" height="15" viewBox="0 0 15 15"><rect x="1" y="1" width="13" height="13" rx="2.5" fill="#fff" stroke="#6a6a6a" stroke-width="1.8"/><path d="M3.8 7.2 L6.3 10 L11.2 4.6" stroke="#505050" stroke-width="1.5" fill="none"/></svg>
<svg style="position:absolute;left:590.0px;top:143.5px;" width="10" height="10" viewBox="0 0 10 10"><rect x="0.5" y="0.5" width="9" height="9" fill="#fff" stroke="#fff"/><path d="M2.5 5 H7.5" stroke="#0a4a8a" stroke-width="1.4"/></svg>
<div class="t" style="left:606.6px;top:141.9px;font-size:13.57px;color:#ffffff;font-weight:bold;font-style:normal;letter-spacing:1.0px;transform:scaleX(0.9434);transform-origin:0 0">raw<span class="us"></span>clk</div>
<svg style="position:absolute;left:590.0px;top:233.5px;" width="10" height="10" viewBox="0 0 10 10"><rect x="0.75" y="0.75" width="8.5" height="8.5" fill="#fff" stroke="#666" stroke-width="1.3"/><path d="M2.5 5 H7.5" stroke="#333" stroke-width="1.3"/></svg>
<div class="t" style="left:606.6px;top:231.9px;font-size:13.57px;color:#111;font-weight:bold;font-style:normal;letter-spacing:1.0px;transform:scaleX(0.9434);transform-origin:0 0">ease<span class="us"></span>cpu</div>
<svg style="position:absolute;left:590.0px;top:305.5px;" width="10" height="10" viewBox="0 0 10 10"><rect x="0.75" y="0.75" width="8.5" height="8.5" fill="#fff" stroke="#666" stroke-width="1.3"/><path d="M2.5 5 H7.5" stroke="#333" stroke-width="1.3"/></svg>
<div class="t" style="left:606.6px;top:303.9px;font-size:13.57px;color:#111;font-weight:bold;font-style:normal;letter-spacing:1.0px;transform:scaleX(0.9434);transform-origin:0 0">ledr<span class="us"></span>0</div>
<div class="t" style="left:614.6px;top:159.9px;font-size:13.57px;color:#262626;font-weight:normal;font-style:normal;;transform:scaleX(0.9434);transform-origin:0 0">clk<span class="us"></span>in</div>
<div class="t" style="left:614.6px;top:177.9px;font-size:13.57px;color:#262626;font-weight:normal;font-style:normal;;transform:scaleX(0.9434);transform-origin:0 0">clk<span class="us"></span>in<span class="us"></span>reset</div>
<div class="t" style="left:614.6px;top:195.9px;font-size:13.57px;color:#262626;font-weight:normal;font-style:normal;;transform:scaleX(0.9434);transform-origin:0 0">clk</div>
<div class="t" style="left:614.6px;top:213.9px;font-size:13.57px;color:#262626;font-weight:normal;font-style:normal;;transform:scaleX(0.9434);transform-origin:0 0">clk<span class="us"></span>reset</div>
<div class="t" style="left:614.6px;top:249.9px;font-size:13.57px;color:#262626;font-weight:normal;font-style:normal;;transform:scaleX(0.9434);transform-origin:0 0">clock</div>
<div class="t" style="left:614.6px;top:267.9px;font-size:13.57px;color:#262626;font-weight:normal;font-style:normal;;transform:scaleX(0.9434);transform-origin:0 0">reset</div>
<div class="t" style="left:614.6px;top:285.9px;font-size:13.57px;color:#262626;font-weight:normal;font-style:normal;;transform:scaleX(0.9434);transform-origin:0 0">avm<span class="us"></span>d</div>
<div class="t" style="left:614.6px;top:321.9px;font-size:13.57px;color:#262626;font-weight:normal;font-style:normal;;transform:scaleX(0.9434);transform-origin:0 0">conduit<span class="us"></span>ledr</div>
<div class="t" style="left:614.6px;top:339.9px;font-size:13.57px;color:#262626;font-weight:normal;font-style:normal;;transform:scaleX(0.9434);transform-origin:0 0">clock</div>
<div class="t" style="left:614.6px;top:357.9px;font-size:13.57px;color:#262626;font-weight:normal;font-style:normal;;transform:scaleX(0.9434);transform-origin:0 0">reset</div>
<div class="t" style="left:614.6px;top:375.9px;font-size:13.57px;color:#262626;font-weight:normal;font-style:normal;;transform:scaleX(0.9434);transform-origin:0 0">avs<span class="us"></span>s</div>
<div class="t" style="left:614.6px;top:393.9px;font-size:13.57px;color:#262626;font-weight:normal;font-style:normal;;transform:scaleX(0.9434);transform-origin:0 0">conduit<span class="us"></span>ledr1</div>
<div class="t" style="left:614.6px;top:411.9px;font-size:13.57px;color:#262626;font-weight:normal;font-style:normal;;transform:scaleX(0.9434);transform-origin:0 0">reset1</div>
<div class="t" style="left:614.6px;top:429.9px;font-size:13.57px;color:#262626;font-weight:normal;font-style:normal;;transform:scaleX(0.9434);transform-origin:0 0">avs<span class="us"></span>s1</div>
<div class="t" style="left:735.7px;top:141.9px;font-size:13.57px;color:#bfe0ff;font-weight:normal;font-style:normal;;transform:scaleX(0.9434);transform-origin:0 0">Clock Source</div>
<div class="t" style="left:735.7px;top:159.9px;font-size:13.57px;color:#262626;font-weight:normal;font-style:normal;;transform:scaleX(0.9434);transform-origin:0 0">Clock Input</div>
<div class="t" style="left:735.7px;top:177.9px;font-size:13.57px;color:#262626;font-weight:normal;font-style:normal;;transform:scaleX(0.9434);transform-origin:0 0">Reset Input</div>
<div class="t" style="left:735.7px;top:195.9px;font-size:13.57px;color:#262626;font-weight:normal;font-style:normal;;transform:scaleX(0.9434);transform-origin:0 0">Clock Output</div>
<div class="t" style="left:735.7px;top:213.9px;font-size:13.57px;color:#262626;font-weight:normal;font-style:normal;;transform:scaleX(0.9434);transform-origin:0 0">Reset Output</div>
<div class="t" style="left:735.7px;top:231.9px;font-size:13.57px;color:#262626;font-weight:normal;font-style:normal;;transform:scaleX(0.9434);transform-origin:0 0">ease<span class="us"></span>cpu</div>
<div class="t" style="left:735.7px;top:249.9px;font-size:13.57px;color:#262626;font-weight:normal;font-style:normal;;transform:scaleX(0.9434);transform-origin:0 0">Clock Input</div>
<div class="t" style="left:735.7px;top:267.9px;font-size:13.57px;color:#262626;font-weight:normal;font-style:normal;;transform:scaleX(0.9434);transform-origin:0 0">Reset Input</div>
<div class="t" style="left:735.7px;top:285.9px;font-size:13.57px;color:#262626;font-weight:normal;font-style:normal;;transform:scaleX(0.9434);transform-origin:0 0">Avalon Memory Mapped Master</div>
<div class="t" style="left:735.7px;top:303.9px;font-size:13.57px;color:#262626;font-weight:normal;font-style:normal;;transform:scaleX(0.9434);transform-origin:0 0">ledr</div>
<div class="t" style="left:735.7px;top:321.9px;font-size:13.57px;color:#262626;font-weight:normal;font-style:normal;;transform:scaleX(0.9434);transform-origin:0 0">Conduit</div>
<div class="t" style="left:735.7px;top:339.9px;font-size:13.57px;color:#262626;font-weight:normal;font-style:normal;;transform:scaleX(0.9434);transform-origin:0 0">Clock Input</div>
<div class="t" style="left:735.7px;top:357.9px;font-size:13.57px;color:#262626;font-weight:normal;font-style:normal;;transform:scaleX(0.9434);transform-origin:0 0">Reset Input</div>
<div class="t" style="left:735.7px;top:375.9px;font-size:13.57px;color:#262626;font-weight:normal;font-style:normal;;transform:scaleX(0.9434);transform-origin:0 0">Avalon Memory Mapped Slave</div>
<div class="t" style="left:735.7px;top:393.9px;font-size:13.57px;color:#262626;font-weight:normal;font-style:normal;;transform:scaleX(0.9434);transform-origin:0 0">Conduit</div>
<div class="t" style="left:735.7px;top:411.9px;font-size:13.57px;color:#262626;font-weight:normal;font-style:normal;;transform:scaleX(0.9434);transform-origin:0 0">Conduit</div>
<div class="t" style="left:735.7px;top:429.9px;font-size:13.57px;color:#262626;font-weight:normal;font-style:normal;;transform:scaleX(0.9434);transform-origin:0 0">Conduit</div>
<div class="t" style="left:936.5px;top:159.9px;font-size:13.57px;color:#111;font-weight:bold;font-style:normal;letter-spacing:0.7px;transform:scaleX(0.9434);transform-origin:0 0">main<span class="us"></span>clock</div>
<div class="t" style="left:936.5px;top:177.9px;font-size:13.57px;color:#111;font-weight:bold;font-style:normal;letter-spacing:0.7px;transform:scaleX(0.9434);transform-origin:0 0">reset</div>
<div class="t" style="left:936.5px;top:321.9px;font-size:13.57px;color:#111;font-weight:bold;font-style:normal;letter-spacing:0.7px;transform:scaleX(0.9434);transform-origin:0 0">ledr</div>
<div class="t" style="left:937.0px;top:197.4px;font-size:13.57px;color:#c8c8c8;font-weight:bold;font-style:italic;letter-spacing:0.75px;transform:scaleX(0.9434);transform-origin:0 0">Double-click to</div>
<div class="t" style="left:937.0px;top:215.4px;font-size:13.57px;color:#c8c8c8;font-weight:bold;font-style:italic;letter-spacing:0.75px;transform:scaleX(0.9434);transform-origin:0 0">Double-click to</div>
<div class="t" style="left:937.0px;top:251.4px;font-size:13.57px;color:#c8c8c8;font-weight:bold;font-style:italic;letter-spacing:0.75px;transform:scaleX(0.9434);transform-origin:0 0">Double-click to</div>
<div class="t" style="left:937.0px;top:269.4px;font-size:13.57px;color:#c8c8c8;font-weight:bold;font-style:italic;letter-spacing:0.75px;transform:scaleX(0.9434);transform-origin:0 0">Double-click to</div>
<div class="t" style="left:937.0px;top:287.4px;font-size:13.57px;color:#c8c8c8;font-weight:bold;font-style:italic;letter-spacing:0.75px;transform:scaleX(0.9434);transform-origin:0 0">Double-click to</div>
<div class="t" style="left:937.0px;top:341.4px;font-size:13.57px;color:#c8c8c8;font-weight:bold;font-style:italic;letter-spacing:0.75px;transform:scaleX(0.9434);transform-origin:0 0">Double-click to</div>
<div class="t" style="left:937.0px;top:359.4px;font-size:13.57px;color:#c8c8c8;font-weight:bold;font-style:italic;letter-spacing:0.75px;transform:scaleX(0.9434);transform-origin:0 0">Double-click to</div>
<div class="t" style="left:937.0px;top:377.4px;font-size:13.57px;color:#c8c8c8;font-weight:bold;font-style:italic;letter-spacing:0.75px;transform:scaleX(0.9434);transform-origin:0 0">Double-click to</div>
<div class="t" style="left:937.0px;top:395.4px;font-size:13.57px;color:#c8c8c8;font-weight:bold;font-style:italic;letter-spacing:0.75px;transform:scaleX(0.9434);transform-origin:0 0">Double-click to</div>
<div class="t" style="left:937.0px;top:413.4px;font-size:13.57px;color:#c8c8c8;font-weight:bold;font-style:italic;letter-spacing:0.75px;transform:scaleX(0.9434);transform-origin:0 0">Double-click to</div>
<div class="t" style="left:937.0px;top:431.4px;font-size:13.57px;color:#c8c8c8;font-weight:bold;font-style:italic;letter-spacing:0.75px;transform:scaleX(0.9434);transform-origin:0 0">Double-click to</div>
<div class="t" style="left:1086.0px;top:159.9px;font-size:13.57px;color:#111;font-weight:bold;font-style:italic;;letter-spacing:0.4px;transform:scaleX(0.9434);transform-origin:0 0">exported</div>
<div class="t" style="left:1086.0px;top:195.9px;font-size:13.57px;color:#333;font-weight:normal;font-style:normal;;transform:scaleX(0.9434);transform-origin:0 0">raw<span class="us"></span>clk</div>
<div class="t" style="left:1086.0px;top:249.9px;font-size:13.57px;color:#111;font-weight:bold;font-style:normal;letter-spacing:0.9px;transform:scaleX(0.9434);transform-origin:0 0">raw<span class="us"></span>clk</div>
<div class="t" style="left:1086.0px;top:339.9px;font-size:13.57px;color:#111;font-weight:bold;font-style:normal;letter-spacing:0.9px;transform:scaleX(0.9434);transform-origin:0 0">raw<span class="us"></span>clk</div>
<div class="t" style="left:1087.0px;top:267.9px;font-size:13.57px;color:#222;font-weight:normal;font-style:normal;;transform:scaleX(0.9434);transform-origin:0 0">[clock]</div>
<div class="t" style="left:1087.0px;top:285.9px;font-size:13.57px;color:#222;font-weight:normal;font-style:normal;;transform:scaleX(0.9434);transform-origin:0 0">[clock]</div>
<div class="t" style="left:1087.0px;top:357.9px;font-size:13.57px;color:#222;font-weight:normal;font-style:normal;;transform:scaleX(0.9434);transform-origin:0 0">[clock]</div>
<div class="t" style="left:1087.0px;top:375.9px;font-size:13.57px;color:#222;font-weight:normal;font-style:normal;;transform:scaleX(0.9434);transform-origin:0 0">[clock]</div>
<svg style="position:absolute;left:1165.0px;top:378.0px;" width="9" height="9" viewBox="0 0 9 9"><path d="M1 8 L8 1" stroke="#bbb" stroke-width="1.5"/><rect x="0" y="5" width="4" height="4" fill="#ccc"/></svg>
<div class="t" style="left:1183.0px;top:375.9px;font-size:13.57px;color:#111;font-weight:bold;font-style:normal;letter-spacing:0.3px;transform:scaleX(0.9434);transform-origin:0 0">0x8000<span class="us"></span>0000</div>
<div class="t" style="left:1317.3px;top:375.9px;font-size:13.57px;color:#262626;font-weight:normal;font-style:normal;;transform:scaleX(0.9434);transform-origin:0 0">0x8000<span class="us"></span>0000</div>
<svg style="position:absolute;left:568.0px;top:161.0px;" width="17" height="10" viewBox="0 0 17 10"><path d="M1.5 1.5 H6 C8.5 1.5 9.5 3 9.5 5 C9.5 7 8.5 8.5 6 8.5 H1.5 Z" fill="#f4f4f4" stroke="#444" stroke-width="1.8"/><path d="M9.5 5 H17" stroke="#555" stroke-width="2"/></svg>
<svg style="position:absolute;left:568.0px;top:179.0px;" width="17" height="10" viewBox="0 0 17 10"><path d="M1.5 1.5 H5 L9.5 5 L5 8.5 H1.5 Z" fill="#f4f4f4" stroke="#444" stroke-width="1.8" stroke-linejoin="round"/><path d="M9.5 5 H17" stroke="#555" stroke-width="1.6"/></svg>
<svg style="position:absolute;left:509.5px;top:196px" width="80.5" height="154"><path d="M4 150 V12 Q4 6 10 6 H69.5" stroke="#666666" stroke-width="2.1" fill="none"/><path d="M73.5 2 L69.5 6 L73.5 10" stroke="#666666" stroke-width="1.5" fill="none"/></svg>
<svg style="position:absolute;left:525.5px;top:214px" width="64.5" height="154"><path d="M4 150 V12 Q4 6 10 6 H53.5" stroke="#666666" stroke-width="2.1" fill="none"/><path d="M57.5 2 L53.5 6 L57.5 10" stroke="#666666" stroke-width="1.5" fill="none"/></svg>
<svg style="position:absolute;left:541.5px;top:286px" width="48.5" height="100"><path d="M4 96 V12 Q4 6 10 6 H37.5" stroke="#666666" stroke-width="2.1" fill="none"/><path d="M41.5 2 L37.5 6 L41.5 10" stroke="#666666" stroke-width="1.5" fill="none"/></svg>
<div style="left:513.5px;top:254.9px;width:65.5px;height:2.1px;background:#666666;"></div>
<svg style="position:absolute;left:508.5px;top:251.0px;" width="10" height="10" viewBox="0 0 10 10"><circle cx="5" cy="5" r="4.2" fill="#000"/></svg>
<svg style="position:absolute;left:576.0px;top:252.0px;" width="8" height="8" viewBox="0 0 8 8"><path d="M0 0.8 L7 4 L0 7.2 Z" fill="#666666"/></svg>
<div style="left:529.5px;top:272.9px;width:49.5px;height:2.1px;background:#666666;"></div>
<svg style="position:absolute;left:524.5px;top:269.0px;" width="10" height="10" viewBox="0 0 10 10"><circle cx="5" cy="5" r="4.2" fill="#000"/></svg>
<svg style="position:absolute;left:576.0px;top:270.0px;" width="8" height="8" viewBox="0 0 8 8"><path d="M0 0.8 L7 4 L0 7.2 Z" fill="#666666"/></svg>
<div style="left:513.5px;top:344.9px;width:65.5px;height:2.1px;background:#666666;"></div>
<svg style="position:absolute;left:508.5px;top:341.0px;" width="10" height="10" viewBox="0 0 10 10"><circle cx="5" cy="5" r="4.2" fill="#000"/></svg>
<svg style="position:absolute;left:576.0px;top:342.0px;" width="8" height="8" viewBox="0 0 8 8"><path d="M0 0.8 L7 4 L0 7.2 Z" fill="#666666"/></svg>
<div style="left:529.5px;top:362.9px;width:49.5px;height:2.1px;background:#666666;"></div>
<svg style="position:absolute;left:524.5px;top:359.0px;" width="10" height="10" viewBox="0 0 10 10"><circle cx="5" cy="5" r="4.2" fill="#000"/></svg>
<svg style="position:absolute;left:576.0px;top:360.0px;" width="8" height="8" viewBox="0 0 8 8"><path d="M0 0.8 L7 4 L0 7.2 Z" fill="#666666"/></svg>
<div style="left:545.5px;top:380.9px;width:33.5px;height:2.1px;background:#666666;"></div>
<svg style="position:absolute;left:540.5px;top:377.0px;" width="10" height="10" viewBox="0 0 10 10"><circle cx="5" cy="5" r="4.2" fill="#000"/></svg>
<svg style="position:absolute;left:576.0px;top:378.0px;" width="8" height="8" viewBox="0 0 8 8"><path d="M0 0.8 L7 4 L0 7.2 Z" fill="#666666"/></svg>
<div style="left:560.8px;top:328.0px;width:1.5px;height:108.0px;background:#d0d0d0;"></div>
<div style="left:561.5px;top:399.2px;width:22.5px;height:1.5px;background:#d0d0d0;"></div>
<svg style="position:absolute;left:557.0px;top:395.5px;" width="9" height="9" viewBox="0 0 9 9"><circle cx="4.5" cy="4.5" r="3.5" fill="#fff" stroke="#d0d0d0" stroke-width="1.5"/></svg>
<div style="left:561.5px;top:417.2px;width:22.5px;height:1.5px;background:#d0d0d0;"></div>
<svg style="position:absolute;left:557.0px;top:413.5px;" width="9" height="9" viewBox="0 0 9 9"><circle cx="4.5" cy="4.5" r="3.5" fill="#fff" stroke="#d0d0d0" stroke-width="1.5"/></svg>
<div style="left:561.5px;top:435.2px;width:22.5px;height:1.5px;background:#d0d0d0;"></div>
<svg style="position:absolute;left:557.0px;top:431.5px;" width="9" height="9" viewBox="0 0 9 9"><circle cx="4.5" cy="4.5" r="3.5" fill="#fff" stroke="#d0d0d0" stroke-width="1.5"/></svg>
<svg style="position:absolute;left:557.0px;top:323.5px;" width="9" height="9" viewBox="0 0 9 9"><circle cx="4.5" cy="4.5" r="3.5" fill="#fff" stroke="#d0d0d0" stroke-width="1.5"/></svg>
<svg style="position:absolute;left:566.0px;top:322.0px;" width="18" height="12" viewBox="0 0 18 12"><circle cx="6" cy="6" r="4.8" fill="#fff" stroke="#777" stroke-width="1.6"/><path d="M0 6 H1.2 M10.8 6 H18" stroke="#777" stroke-width="1.5"/></svg>
<svg style="position:absolute;left:468.0px;top:737.0px;" width="20" height="20" viewBox="0 0 20 20"><path d="M2 16 C3 10 4 5 6 4 C7 4 7 8 7 11" stroke="#ee4444" stroke-width="1.4" fill="none"/><path d="M11 11 H19" stroke="#ee3030" stroke-width="1.8"/><path d="M9.5 2 V18" stroke="#3a6cc8" stroke-width="2.6"/></svg>
<svg style="position:absolute;left:489.0px;top:737.0px;" width="20" height="20" viewBox="0 0 20 20"><path d="M3 16 C4 11 4 4 7 3 M2 9 H7" stroke="#ee3a3a" stroke-width="1.5" fill="none"/><path d="M14 4 V14 C14 16 16 16 17 15 M12 9 H17" stroke="#ee3a3a" stroke-width="1.5" fill="none"/><path d="M10 2 V18" stroke="#3a6cc8" stroke-width="2.6"/></svg>
<svg style="position:absolute;left:514.0px;top:739.0px;" width="20" height="15" viewBox="0 0 20 15"><path d="M1.5 1.5 Q1 1 2 1 H18 Q19 1 18.5 1.5 L11.5 12.5 Q10 14.5 8.5 12.5 Z" fill="#ff9a00"/><path d="M5 3 H15" stroke="#ffd28a" stroke-width="1"/></svg>
<svg style="position:absolute;left:536.0px;top:739.0px;" width="18" height="15" viewBox="0 0 18 15"><path d="M1 1 H17 L10.5 10 V14 H7.5 V10 Z" fill="#8a8a8a"/><path d="M3 3.5 H15 M5 6.5 H13" stroke="#c8c8c8" stroke-width="1"/></svg>
<div class="t" style="left:560.6px;top:742.6px;font-size:13.57px;color:#111;font-weight:bold;font-style:normal;;letter-spacing:0.4px;transform:scaleX(0.9434);transform-origin:0 0">Current filter:</div>
<div style="left:435.0px;top:766.0px;width:1471.0px;height:233.0px;background:#f0f0f0;border:2.5px solid #a4a4a4;border-radius:5px 5px 0 0;box-sizing:border-box"></div>
<div style="left:437.0px;top:792.0px;width:1467.0px;height:2.0px;background:#7f7f7f;"></div>
<div style="left:437.0px;top:768.0px;width:120.0px;height:26.0px;background:linear-gradient(#8c97a5,#b3bbc5 25%,#d8dce1 60%,#f0f0f0 100%);border-radius:4px 0 0 0"></div>
<div style="left:557.0px;top:768.0px;width:2.0px;height:26.0px;background:#7a7a7a;"></div>
<div style="left:437.0px;top:767.0px;width:122.0px;height:2.0px;background:#69737f;"></div>
<div class="t" style="left:466.0px;top:774.6px;font-size:13.57px;color:#262626;font-weight:normal;font-style:normal;;transform:scaleX(0.9434);transform-origin:0 0">Messages</div>
<svg style="position:absolute;left:537.0px;top:774.0px;" width="12" height="12" viewBox="0 0 12 12"><g fill="none" stroke="#8c8c8c" stroke-width="1.3"><rect x="3.5" y="3.5" width="5" height="5"/><circle cx="2.6" cy="2.6" r="1.9"/><circle cx="9.4" cy="2.6" r="1.9"/><circle cx="2.6" cy="9.4" r="1.9"/><circle cx="9.4" cy="9.4" r="1.9"/></g></svg>
<div style="left:1851.0px;top:782.5px;width:8.0px;height:3.0px;background:#1a1a1a;"></div>
<svg style="position:absolute;left:1867.0px;top:775.0px;" width="16" height="13" viewBox="0 0 16 13"><rect x="1" y="4" width="10" height="8" fill="none" stroke="#1a1a1a" stroke-width="2"/><rect x="1" y="4" width="10" height="2.5" fill="#1a1a1a"/><path d="M9 5 L13 1.5" stroke="#1a1a1a" stroke-width="1.6" fill="none"/><circle cx="13.5" cy="1.8" r="1.6" fill="#1a1a1a"/></svg>
<svg style="position:absolute;left:1888.0px;top:776.5px;" width="14" height="10" viewBox="0 0 14 10"><rect x="1" y="1" width="12" height="8" rx="1" fill="none" stroke="#1a1a1a" stroke-width="2"/><rect x="1" y="1" width="12" height="3" fill="#1a1a1a"/></svg>
<svg style="position:absolute;left:442.0px;top:770.0px;" width="18" height="18" viewBox="0 0 18 18"><path d="M2.5 1.5 L9.5 8.5 M9.5 1.5 L2.5 8.5" stroke="#ee5050" stroke-width="1.8"/><circle cx="5" cy="13.2" r="4" fill="#22a0f5"/><rect x="11.6" y="2.6" width="4.8" height="4.8" fill="#4a78c0"/><rect x="11.6" y="10.3" width="4.8" height="5.7" fill="#6a8fd0"/></svg>
<div style="left:437.0px;top:794.0px;width:1467.0px;height:204.0px;background:#f0f0f0;border:2px solid #a9a9a9;box-sizing:border-box"></div>
<div style="left:439.0px;top:796.0px;width:1463.0px;height:113.0px;background:#ffffff;"></div>
<div style="left:439.0px;top:820.4px;width:1463.0px;height:1.5px;background:#d0d0d0;"></div>
<div style="left:439.0px;top:842.2px;width:1463.0px;height:1.5px;background:#a6a6a6;"></div>
<div style="left:439.0px;top:864.3px;width:1463.0px;height:1.5px;background:#a6a6a6;"></div>
<div style="left:439.0px;top:886.4px;width:1463.0px;height:1.5px;background:#a6a6a6;"></div>
<div style="left:439.0px;top:908.2px;width:1463.0px;height:1.5px;background:#a6a6a6;"></div>
<div style="left:513.0px;top:796.0px;width:1.5px;height:113.0px;background:#c8c8c8;"></div>
<div style="left:590.0px;top:796.0px;width:1.5px;height:113.0px;background:#c8c8c8;"></div>
<div class="t" style="left:449.3px;top:802.1px;font-size:13.57px;color:#333;font-weight:normal;font-style:normal;;transform:scaleX(0.9434);transform-origin:0 0">Type</div>
<div class="t" style="left:522.8px;top:802.1px;font-size:13.57px;color:#333;font-weight:normal;font-style:normal;;transform:scaleX(0.9434);transform-origin:0 0">Path</div>
<div class="t" style="left:600.0px;top:802.1px;font-size:13.57px;color:#333;font-weight:normal;font-style:normal;;transform:scaleX(0.9434);transform-origin:0 0">Message</div>
<svg style="position:absolute;left:439.0px;top:825.0px;" width="10" height="10" viewBox="0 0 10 10"><rect x="0.75" y="0.75" width="8.5" height="8.5" fill="#fff" stroke="#7a8a9a" stroke-width="1.5"/><path d="M2.5 5 H7.5" stroke="#4a6aa0" stroke-width="1.4"/></svg>
<svg style="position:absolute;left:449.0px;top:823.0px;" width="17" height="15" viewBox="0 0 17 15"><path d="M8.5 1.2 L15.8 13.8 H1.2 Z" fill="#fde77f" stroke="#e4a32c" stroke-width="1.6" stroke-linejoin="round"/><path d="M8.5 5 V9.5" stroke="#c88a10" stroke-width="1.8"/><circle cx="8.5" cy="11.6" r="0.9" fill="#c88a10"/></svg>
<div class="t" style="left:516.2px;top:826.1px;font-size:13.57px;color:#3a3af0;font-weight:normal;font-style:normal;;transform:scaleX(0.9434);transform-origin:0 0">3 Warnings</div>
<svg style="position:absolute;left:458.0px;top:846.8px;" width="17" height="15" viewBox="0 0 17 15"><path d="M8.5 1.2 L15.8 13.8 H1.2 Z" fill="#fde77f" stroke="#e4a32c" stroke-width="1.6" stroke-linejoin="round"/><path d="M8.5 5 V9.5" stroke="#c88a10" stroke-width="1.8"/><circle cx="8.5" cy="11.6" r="0.9" fill="#c88a10"/></svg>
<div class="t" style="left:516.2px;top:850.4px;font-size:13.57px;color:#0808f0;font-weight:bold;font-style:normal;letter-spacing:0.75px;transform:scaleX(0.9434);transform-origin:0 0">play<span class="us"></span>ledr<span class="us"></span>0</div>
<div class="t" style="left:593px;top:850.4px;font-size:13.57px;color:#3030ee;letter-spacing:0.12px;transform:scaleX(0.9434);transform-origin:0 0"><b style="color:#0808f0;letter-spacing:0.7px">ledr<span class="us"></span>0.conduit<span class="us"></span>ledr1</b> must be exported, or connected to a matching conduit.</div>
<svg style="position:absolute;left:458.0px;top:868.8px;" width="17" height="15" viewBox="0 0 17 15"><path d="M8.5 1.2 L15.8 13.8 H1.2 Z" fill="#fde77f" stroke="#e4a32c" stroke-width="1.6" stroke-linejoin="round"/><path d="M8.5 5 V9.5" stroke="#c88a10" stroke-width="1.8"/><circle cx="8.5" cy="11.6" r="0.9" fill="#c88a10"/></svg>
<div class="t" style="left:516.2px;top:872.4px;font-size:13.57px;color:#0808f0;font-weight:bold;font-style:normal;letter-spacing:0.75px;transform:scaleX(0.9434);transform-origin:0 0">play<span class="us"></span>ledr<span class="us"></span>0</div>
<div class="t" style="left:593px;top:872.4px;font-size:13.57px;color:#3030ee;letter-spacing:0.12px;transform:scaleX(0.9434);transform-origin:0 0"><b style="color:#0808f0;letter-spacing:0.7px">ledr<span class="us"></span>0.reset1</b> must be exported, or connected to a matching conduit.</div>
<svg style="position:absolute;left:458.0px;top:890.8px;" width="17" height="15" viewBox="0 0 17 15"><path d="M8.5 1.2 L15.8 13.8 H1.2 Z" fill="#fde77f" stroke="#e4a32c" stroke-width="1.6" stroke-linejoin="round"/><path d="M8.5 5 V9.5" stroke="#c88a10" stroke-width="1.8"/><circle cx="8.5" cy="11.6" r="0.9" fill="#c88a10"/></svg>
<div class="t" style="left:516.2px;top:894.4px;font-size:13.57px;color:#0808f0;font-weight:bold;font-style:normal;letter-spacing:0.75px;transform:scaleX(0.9434);transform-origin:0 0">play<span class="us"></span>ledr<span class="us"></span>0</div>
<div class="t" style="left:593px;top:894.4px;font-size:13.57px;color:#3030ee;letter-spacing:0.12px;transform:scaleX(0.9434);transform-origin:0 0"><b style="color:#0808f0;letter-spacing:0.7px">ledr<span class="us"></span>0.avs<span class="us"></span>s1</b> must be exported, or connected to a matching conduit.</div>
<div style="left:439.0px;top:980.0px;width:1463.0px;height:15.0px;background:#f0f0f0;"></div>
<div style="left:457.0px;top:981.0px;width:1426.0px;height:13.0px;background:#cdcdcd;"></div>
<svg style="position:absolute;left:443.0px;top:983.0px;" width="10" height="10" viewBox="0 0 10 10"><path d="M7 1 L3 5 L7 9" stroke="#333" stroke-width="1.6" fill="none"/></svg>
<svg style="position:absolute;left:1887.0px;top:983.0px;" width="10" height="10" viewBox="0 0 10 10"><path d="M3 1 L7 5 L3 9" stroke="#333" stroke-width="1.6" fill="none"/></svg>
<div style="left:14.4px;top:1005.0px;width:1721.4px;height:21.3px;background:#f3f1b5;border:1px solid #dedcaa;box-sizing:border-box"></div>
<div class="t" style="left:22.3px;top:1008.9px;font-size:13.57px;color:#333;font-weight:normal;font-style:normal;;transform:scaleX(0.9434);transform-origin:0 0">0 Errors, 3 Warnings</div>
<div style="left:1742.0px;top:1005.0px;width:106.0px;height:21.3px;background:#e5e5e5;border:1px solid #c8c8c8;box-sizing:border-box"></div>
<div class="t" style="left:1750.0px;top:1009.1px;font-size:13.57px;color:#222;font-weight:normal;font-style:normal;;transform:scaleX(0.9434);transform-origin:0 0">Generate HDL...</div>
<div style="left:1855.0px;top:1005.0px;width:50.0px;height:21.3px;background:#e5e5e5;border:1px solid #c8c8c8;box-sizing:border-box"></div>
<div class="t" style="left:1862.0px;top:1009.1px;font-size:13.57px;color:#222;font-weight:normal;font-style:normal;;transform:scaleX(0.9434);transform-origin:0 0">Finish</div>
<div style="left:1205.0px;top:1034.0px;width:30.0px;height:4.0px;background:#c4c4c4;"></div>
<div style="left:1383.0px;top:1035.0px;width:23.0px;height:3.5px;background:#1e6cc0;"></div>
<div style="left:1330.0px;top:1032.0px;width:12.0px;height:1.5px;background:#5a8ac0;"></div>
<div style="left:0.0px;top:1040.0px;width:1920.0px;height:40.0px;background:#0d121c;"></div>
<div style="left:490.0px;top:1040.0px;width:48.0px;height:40.0px;background:#3a3e45;"></div>
<svg style="position:absolute;left:16.0px;top:1053.0px;" width="17" height="17" viewBox="0 0 17 17"><path d="M0 2.3 L7 1.3 V8 H0 Z M8 1.1 L17 0 V8 H8 Z M0 9 H7 V15.7 L0 14.7 Z M8 9 H17 V17 L8 15.9 Z" fill="#fff"/></svg>
<svg style="position:absolute;left:64.0px;top:1052.0px;" width="18" height="18" viewBox="0 0 18 18"><circle cx="11" cy="7" r="5.5" fill="none" stroke="#fff" stroke-width="1.6"/><path d="M7 11 L1 17" stroke="#fff" stroke-width="1.8"/></svg>
<svg style="position:absolute;left:111.0px;top:1052.0px;" width="18" height="18" viewBox="0 0 18 18"><rect x="3" y="3" width="10" height="12" fill="none" stroke="#fff" stroke-width="1.5"/><path d="M0 5 H2 M0 13 H2 M15 1 V7 M15 9 V17" stroke="#fff" stroke-width="1.5"/></svg>
<svg style="position:absolute;left:161.0px;top:1051.0px;" width="20" height="20" viewBox="0 0 20 20"><path d="M18 11 H5 C5 16 11 18 17 15 V18.5 C9 21 1 18 1 10.5 C1 4 6 1 10.5 1 C15.5 1 19 4 19 9 Z M5.2 8 H14.3 C14 5 12 3.5 9.8 3.5 C7.5 3.5 5.7 5.5 5.2 8 Z" fill="#1b8ef0"/></svg>
<div style="left:151.0px;top:1077.0px;width:40.0px;height:3.0px;background:#76b9ed;"></div>
<svg style="position:absolute;left:208.0px;top:1050.0px;" width="23" height="21" viewBox="0 0 23 21"><path d="M1 2 H8 L10 4 H22 V19 H1 Z" fill="#f3cf6a"/><path d="M1 6 H22 V19 H1 Z" fill="#fbe39a"/><path d="M6 12 H17 V19 H14 V15 H9 V19 H6 Z" fill="#2f9be8"/></svg>
<div style="left:199.6px;top:1077.0px;width:40.0px;height:3.0px;background:#76b9ed;"></div>
<svg style="position:absolute;left:256.0px;top:1048.0px;" width="25" height="25" viewBox="0 0 25 25"><path d="M8 7 C8 1.5 17 1.5 17 7" stroke="#fff" stroke-width="2" fill="none"/><rect x="1" y="7" width="23" height="17" fill="#fff"/><rect x="7" y="10.5" width="5" height="5" fill="#f25022"/><rect x="13" y="10.5" width="5" height="5" fill="#7fba00"/><rect x="7" y="16.5" width="5" height="5" fill="#00a4ef"/><rect x="13" y="16.5" width="5" height="5" fill="#ffb900"/></svg>
<svg style="position:absolute;left:306.0px;top:1051.0px;" width="23" height="19" viewBox="0 0 23 19"><path d="M1 7 L11.5 1 L22 7 V18 H1 Z" fill="#fff"/><path d="M1 7 L11.5 13 L22 7" stroke="#0d121c" stroke-width="1.5" fill="none"/><path d="M12 9 L17 16" stroke="#0d121c" stroke-width="1.5"/></svg>
<svg style="position:absolute;left:355.0px;top:1050.0px;" width="23" height="21" viewBox="0 0 23 21"><rect x="1" y="1" width="21" height="19" fill="#000" stroke="#777" stroke-width="1.5"/><rect x="1" y="1" width="21" height="4" fill="#888"/><path d="M4 8 L7 10 L4 12 M8 13 H12" stroke="#ccc" stroke-width="1"/></svg>
<svg style="position:absolute;left:404.0px;top:1050.0px;" width="24" height="22" viewBox="0 0 24 22"><circle cx="11" cy="11" r="10" fill="#5aa9e6"/><path d="M2 9 C8 8 15 13 20 19" stroke="#e8f4ff" stroke-width="2.5" fill="none"/><rect x="14" y="12" width="9" height="9" rx="2" fill="#1465b0"/></svg>
<div style="left:395.8px;top:1077.0px;width:40.0px;height:3.0px;background:#76b9ed;"></div>
<svg style="position:absolute;left:452.0px;top:1049.0px;" width="24" height="23" viewBox="0 0 24 23"><path d="M20 12 H7 C7 16 13 18 18 15 V18 C10 21 3 18 3 11.5 C3 6 7.5 3 12 3 C17 3 20 6 20 10 Z M7.2 9 H15.5 C15 6.5 13.5 5.5 11.5 5.5 C9.5 5.5 7.8 7 7.2 9 Z" fill="#36b7ef"/><path d="M2 20 C-1 16 10 3 20 1 C24 0 24 4 21 8" stroke="#f0c419" stroke-width="1.8" fill="none"/></svg>
<div style="left:444.3px;top:1077.0px;width:40.0px;height:3.0px;background:#76b9ed;"></div>
<svg style="position:absolute;left:503.0px;top:1053.0px;" width="21" height="17" viewBox="0 0 21 17"><circle cx="10.5" cy="3.5" r="3.2" fill="#2b90f0"/><circle cx="3.5" cy="13" r="3.2" fill="#2b90f0"/><circle cx="17.5" cy="13" r="3.2" fill="#2b90f0"/><path d="M10.5 3.5 V9 M3.5 9 H17.5 V13 M3.5 9 V13" stroke="#2b90f0" stroke-width="1.3" fill="none"/></svg>
<div style="left:490.0px;top:1077.0px;width:48.0px;height:3.0px;background:#76b9ed;"></div>
<svg style="position:absolute;left:1637.0px;top:1050.0px;" width="17" height="17" viewBox="0 0 17 17"><circle cx="5.5" cy="8" r="2.8" fill="none" stroke="#fff" stroke-width="1.3"/><circle cx="12" cy="5" r="2.8" fill="none" stroke="#fff" stroke-width="1.3"/><path d="M0.5 17 C1 12 10 12 10.5 17 M8 12 C9 9 16 9 16.5 14" stroke="#fff" stroke-width="1.3" fill="none"/></svg>
<svg style="position:absolute;left:1674.0px;top:1054.0px;" width="14" height="10" viewBox="0 0 14 10"><path d="M1 8 L7 2 L13 8" stroke="#fff" stroke-width="1.4" fill="none"/></svg>
<svg style="position:absolute;left:1697.0px;top:1053.0px;" width="18" height="13" viewBox="0 0 18 13"><rect x="1" y="3" width="14" height="8" fill="#fff"/><rect x="15" y="5" width="2" height="4" fill="#fff"/><rect x="3" y="1" width="3" height="2" fill="#fff"/></svg>
<svg style="position:absolute;left:1720.0px;top:1051.0px;" width="18" height="17" viewBox="0 0 18 17"><rect x="1" y="1" width="16" height="11" fill="none" stroke="#fff" stroke-width="1.4"/><path d="M9 12 V16 M5 16 H13" stroke="#fff" stroke-width="1.4"/></svg>
<svg style="position:absolute;left:1744.0px;top:1052.0px;" width="17" height="15" viewBox="0 0 17 15"><path d="M1 5 H4 L9 1 V14 L4 10 H1 Z" fill="none" stroke="#fff" stroke-width="1.3"/><path d="M11 5 L16 10 M16 5 L11 10" stroke="#fff" stroke-width="1.3"/></svg>
<div class="t" style="left:1769.0px;top:1051.8px;font-size:19px;color:#fff;font-weight:normal;font-style:normal;">A</div>
<svg style="position:absolute;left:1801.0px;top:1045.0px;" width="30" height="14" viewBox="0 0 30 14"><g stroke="#fff" stroke-width="1.3" fill="none"><ellipse cx="6" cy="4" rx="4" ry="3"/><path d="M6 7 V10 M1 11 H11"/><path d="M15 2 H22 M18.5 2 C18 6 16 8 14.5 9 M18.5 4 C19 6 21 8 22 8.5 M23 4 H25 M25 1 V9 M17 10 V13 H26"/></g></svg>
<div class="t" style="left:1830.0px;top:1046.6px;font-size:13.57px;color:#fff;font-weight:normal;font-style:normal;;transform:scaleX(0.9434);transform-origin:0 0">9:51</div>
<div class="t" style="left:1793.0px;top:1064.2px;font-size:13.5px;color:#fff;font-weight:normal;font-style:normal;">2018-09-08</div>
<svg style="position:absolute;left:1878.0px;top:1050.0px;" width="19" height="18" viewBox="0 0 19 18"><path d="M1 1 H18 V14 H12 L8 17 V14 H1 Z" fill="none" stroke="#fff" stroke-width="1.4"/></svg>
</div>
</body></html>
